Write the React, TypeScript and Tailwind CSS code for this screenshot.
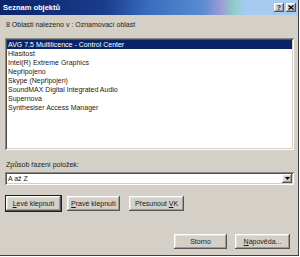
import React from "react";

const bevel =
  "shadow-[inset_-1px_-1px_#555555,inset_1px_1px_#ffffff,inset_-2px_-2px_#9a9893,inset_2px_2px_#e4e2dd]";
const sunken =
  "shadow-[inset_1px_1px_#8a8883,inset_-1px_-1px_#ffffff,inset_2px_2px_#505050,inset_-2px_-2px_#d4d0c8]";

const items = [
  "AVG 7.5 Multilicence - Control Center",
  "Hlasitost",
  "Intel(R) Extreme Graphics",
  "Nepřipojeno",
  "Skype (Nepřipojen)",
  "SoundMAX Digital Integrated Audio",
  "Supernova",
  "Synthesiser Access Manager",
];

function Btn({ children, className = "" }: { children: React.ReactNode; className?: string }) {
  return (
    <div
      className={`h-[15px] flex items-center justify-center bg-[#d4d0c8] text-[#1a1a1a] ${bevel} ${className}`}
    >
      {children}
    </div>
  );
}

export default function App() {
  return (
    <div className="w-[300px] h-[257px] bg-white">
      <div
        className="w-[299px] h-[256px] bg-[#d4d0c8] flex flex-col border-r border-b border-[#404040] text-[7px] leading-[9px] text-[#1a1a1a]"
        style={{ fontFamily: '"Liberation Sans", Arial, sans-serif' }}
      >
        {/* Title bar */}
        <div className="h-[15px] flex items-center justify-between pl-[3px] pr-[2px] bg-[linear-gradient(90deg,#0a246a_0%,#1a3c8c_35%,#3a6cc0_50%,#5a8cd0_68%,#9a9ad8_74%,#90d0c8_79%,#a6caf0_82%,#a6caf0_100%)]">
          <span className="text-white font-bold text-[7.5px]">Seznam objektů</span>
          <div className="flex gap-[2px]">
            <div className={`w-[10px] h-[9px] flex items-center justify-center bg-[#d4d0c8] ${bevel} text-[7px] font-bold leading-none`}>
              ?
            </div>
            <div className={`w-[10px] h-[9px] flex items-center justify-center bg-[#d4d0c8] ${bevel}`}>
              <svg width="6" height="5" viewBox="0 0 6 5">
                <path d="M0.5 0.5 L5.5 4.5 M5.5 0.5 L0.5 4.5" stroke="#000" strokeWidth="1.2" />
              </svg>
            </div>
          </div>
        </div>

        <div className="flex flex-col pl-[5px] pr-[4px]">
          <div className="mt-[5px] pl-[1px] h-[9px]">8 Oblasti nalezeno v : Oznamovací oblast</div>

          {/* List box */}
          <div className={`mt-[9px] h-[112px] bg-white p-[2px] ${sunken}`}>
            {items.map((t, i) => (
              <div
                key={t}
                className={`h-[9px] pl-[1px] ${i === 0 ? "bg-[#0a246a] text-white" : ""}`}
              >
                {t}
              </div>
            ))}
          </div>

          <div className="mt-[10px] pl-[1px] h-[9px]">Způsob řazení položek:</div>

          {/* Combo box */}
          <div className={`mt-[3px] h-[13px] bg-white flex items-center p-[2px] ${sunken}`}>
            <span className="flex-1 pl-[1px]">A až Z</span>
            <div className={`w-[10px] h-[9px] flex items-center justify-center bg-[#d4d0c8] ${bevel}`}>
              <svg width="5" height="3" viewBox="0 0 5 3">
                <path d="M0 0 H5 L2.5 3 Z" fill="#000" />
              </svg>
            </div>
          </div>

          {/* Action buttons */}
          <div className="mt-[10px] flex items-center">
            <div className="border border-[#202020]">
              <Btn className="w-[55px] h-[14px]">
                <span><u>L</u>evé klepnutí</span>
              </Btn>
            </div>
            <Btn className="ml-[5px] w-[53px]">
              <span><u>P</u>ravé klepnutí</span>
            </Btn>
            <Btn className="ml-[9px] w-[55px]">
              <span>Přesunout <u>V</u>K</span>
            </Btn>
          </div>

          {/* Dialog buttons */}
          <div className="mt-[22px] flex justify-end pr-[4px] gap-[8px]">
            <Btn className="w-[53px]">Storno</Btn>
            <Btn className="w-[55px]">
              <span><u>N</u>ápověda...</span>
            </Btn>
          </div>
        </div>
      </div>
    </div>
  );
}
